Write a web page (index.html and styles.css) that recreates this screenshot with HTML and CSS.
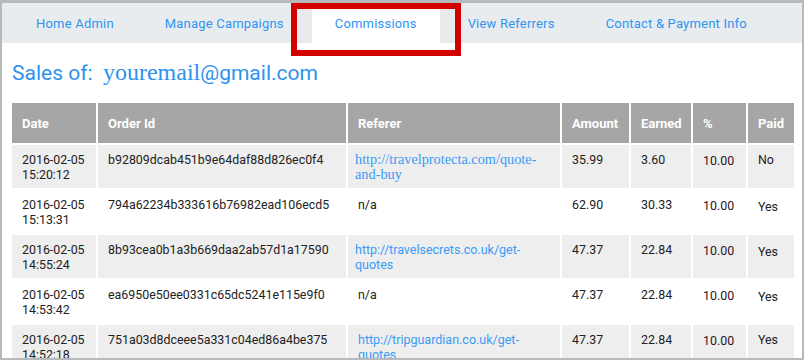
FILE: index.html
```html
<!DOCTYPE html>
<html lang="en">
<head>
    <meta charset="UTF-8">
    <meta name="viewport" content="width=device-width, initial-scale=1.0">
    <title>Commissions - Affiliate Admin</title>
    <link rel="stylesheet" href="styles.css">
</head>
<body>
    <div class="frame">
        <ul class="tabs">
            <li><a href="#">Home Admin</a></li>
            <li><a href="#">Manage Campaigns</a></li>
            <li class="active"><a href="#">Commissions</a></li>
            <li><a href="#">View Referrers</a></li>
            <li><a href="#">Contact &amp; Payment Info</a></li>
        </ul>
        <div class="highlight"></div>

        <h2 class="sales-title">Sales of:&nbsp; <span class="serif">youremail</span>@gmail.com</h2>

        <table class="sales">
            <colgroup>
                <col class="c-date">
                <col class="c-order">
                <col class="c-ref">
                <col class="c-amount">
                <col class="c-earned">
                <col class="c-pct">
                <col class="c-paid">
            </colgroup>
            <thead>
                <tr>
                    <th>Date</th>
                    <th>Order Id</th>
                    <th>Referer</th>
                    <th>Amount</th>
                    <th>Earned</th>
                    <th>%</th>
                    <th>Paid</th>
                </tr>
            </thead>
            <tbody>
                <tr>
                    <td>2016-02-05 15:20:12</td>
                    <td>b92809dcab451b9e64daf88d826ec0f4</td>
                    <td class="ref-cell"><a class="ref serif" href="#">http://travelprotecta.com/quote-and-buy</a></td>
                    <td>35.99</td>
                    <td>3.60</td>
                    <td class="pct">10.00</td>
                    <td>No</td>
                </tr>
                <tr>
                    <td>2016-02-05 15:13:31</td>
                    <td>794a62234b333616b76982ead106ecd5</td>
                    <td class="ref-cell na">n/a</td>
                    <td>62.90</td>
                    <td>30.33</td>
                    <td class="pct">10.00</td>
                    <td class="paid">Yes</td>
                </tr>
                <tr>
                    <td>2016-02-05 14:55:24</td>
                    <td>8b93cea0b1a3b669daa2ab57d1a17590</td>
                    <td class="ref-cell"><a class="ref" href="#">http://travelsecrets.co.uk/get-quotes</a></td>
                    <td>47.37</td>
                    <td>22.84</td>
                    <td class="pct">10.00</td>
                    <td class="paid">Yes</td>
                </tr>
                <tr>
                    <td>2016-02-05 14:53:42</td>
                    <td>ea6950e50ee0331c65dc5241e115e9f0</td>
                    <td class="ref-cell na">n/a</td>
                    <td>47.37</td>
                    <td>22.84</td>
                    <td class="pct">10.00</td>
                    <td class="paid">Yes</td>
                </tr>
                <tr>
                    <td>2016-02-05 14:52:18</td>
                    <td>751a03d8dceee5a331c04ed86a4be375</td>
                    <td class="ref-cell na"><a class="ref" href="#">http://tripguardian.co.uk/get-quotes</a></td>
                    <td>47.37</td>
                    <td>22.84</td>
                    <td class="pct">10.00</td>
                    <td>Yes</td>
                </tr>
            </tbody>
        </table>
    </div>
</body>
</html>
```

FILE: styles.css
```css
html, body {
    margin: 0;
    height: 100%;
    overflow: hidden;
    background: #fff;
}
body {
    font-family: Roboto, "Liberation Sans", Arial, sans-serif;
}
.frame {
    position: relative;
    box-sizing: border-box;
    height: 360px;
    border-style: solid;
    border-color: #b7babd;
    border-width: 3px 2px 2px 2px;
    overflow: hidden;
}
.serif {
    font-family: "Liberation Serif", "Times New Roman", serif;
}

/* top tabs */
.tabs {
    list-style: none;
    margin: 0;
    padding: 0 0 0 11px;
    height: 40px;
    background: #e8ecef;
    display: flex;
    gap: 5px;
}
.tabs li {
    display: flex;
    align-items: center;
    padding: 0 23px;
}
.tabs li.active {
    background: #fff;
}
.tabs a {
    color: #2f95f2;
    text-decoration: none;
    font-size: 13px;
    letter-spacing: 0.2px;
}
.highlight {
    position: absolute;
    left: 289px;
    top: 0;
    width: 158px;
    height: 41px;
    border: 6px solid #d40000;
}

/* title */
.sales-title {
    margin: 17px 0 0 10px;
    font-weight: normal;
    font-size: 21px;
    line-height: 24px;
    color: #2d92ee;
}
.sales-title .serif {
    font-size: 24px;
}

/* table */
.sales {
    margin: 18px 0 0 10px;
    width: 782px;
    table-layout: fixed;
    border-collapse: separate;
    border-spacing: 0;
    font-size: 12.4px;
    color: #222;
}
.c-date { width: 84px; }
.c-order { width: 250px; }
.c-ref { width: 214px; }
.c-amount { width: 69px; }
.c-earned { width: 62px; }
.c-pct { width: 55px; }
.c-paid { width: 48px; }

.sales th {
    background: #a6a6a6;
    color: #fff;
    font-size: 13px;
    font-weight: bold;
    text-align: left;
    height: 40px;
    padding: 0 10px;
    box-sizing: border-box;
}
.sales th + th,
.sales td + td {
    border-left: 2px solid #fff;
}
.sales td {
    border-top: 2px solid #fff;
    vertical-align: top;
    padding: 7px 9px 6px 10px;
    line-height: 15px;
    height: 30px;
}
.sales tbody tr:nth-child(odd) td {
    background: #eeeeee;
}
.sales td.ref-cell {
    padding-left: 7px;
}
.sales td.na {
    padding-left: 10px;
}
.sales .ref {
    color: #3a9bf7;
    text-decoration: none;
    font-size: 12.5px;
}
.sales .ref.serif {
    font-size: 14.3px;
}
.sales td.pct {
    color: #2e1228;
    padding-top: 8px;
    padding-bottom: 5px;
}
.sales td.paid {
    padding-top: 9px;
    padding-bottom: 4px;
}
```
